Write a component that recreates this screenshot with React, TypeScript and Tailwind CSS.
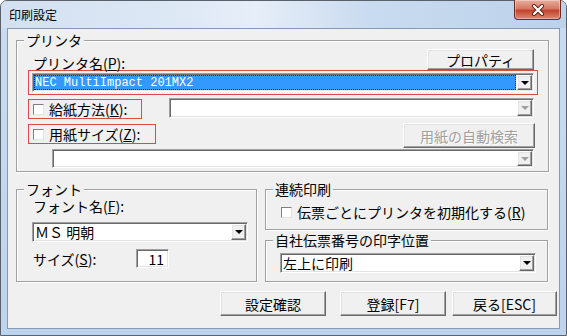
import React from "react";

// classic 3D edges used by the Win32 controls
const sunken =
  "border border-t-[#a0a0a0] border-l-[#a0a0a0] border-b-white border-r-white shadow-[inset_1px_1px_0_#696969,inset_-1px_-1px_0_#e3e3e3]";
const raised =
  "border border-t-white border-l-white border-b-[#696969] border-r-[#696969] shadow-[inset_-1px_-1px_0_#a0a0a0,inset_1px_1px_0_#e3e3e3]";

function Arrow({ disabled }: { disabled?: boolean }) {
  return (
    <div
      className={`flex h-full w-[15px] shrink-0 items-center justify-center bg-[#f0f0f0] ${raised}`}
    >
      <div
        className={`h-0 w-0 border-x-[4px] border-t-[4px] border-x-transparent ${
          disabled ? "border-t-[#a0a0a0]" : "border-t-black"
        }`}
      />
    </div>
  );
}

function Combo({
  value,
  className = "",
  selected,
  disabled,
  mono,
}: {
  value?: string;
  className?: string;
  selected?: boolean;
  disabled?: boolean;
  mono?: boolean;
}) {
  return (
    <div className={`flex bg-white p-[1px] ${sunken} ${className}`}>
      <div
        className={`flex min-w-0 flex-1 items-center ${
          selected
            ? "mr-[1px] border border-dotted border-[#222] bg-[#3399ff] text-white"
            : "pl-[1px]"
        } ${mono ? "font-['Liberation_Mono',monospace] text-[12px]" : ""}`}
      >
        {value}
      </div>
      <Arrow disabled={disabled} />
    </div>
  );
}

function Check() {
  return (
    <div className="h-[11px] w-[11px] shrink-0 border border-t-[#808080] border-l-[#808080] border-b-[#e3e3e3] border-r-[#e3e3e3] bg-white" />
  );
}

function Btn({
  children,
  className = "",
  disabled,
}: {
  children: React.ReactNode;
  className?: string;
  disabled?: boolean;
}) {
  return (
    <div
      className={`flex items-center justify-center bg-[#f0f0f0] ${raised} ${
        disabled ? "text-[#a0a0a0] [text-shadow:1px_1px_0_#fff]" : ""
      } ${className}`}
    >
      {children}
    </div>
  );
}

function GroupBox({
  title,
  className = "",
  children,
}: {
  title: string;
  className?: string;
  children?: React.ReactNode;
}) {
  return (
    <div
      className={`relative border border-[#a0a0a0] shadow-[inset_1px_1px_0_#fff,1px_1px_0_#fff] ${className}`}
    >
      <span className="absolute -top-[9px] left-[7px] flex h-[16px] items-center bg-[#f0f0f0] px-[2px] leading-[14px]">
        {title}
      </span>
      {children}
    </div>
  );
}

const U = ({ c }: { c: string }) => (
  <span className="underline underline-offset-[1px]">{c}</span>
);

export default function App() {
  return (
    <div className="h-[336px] w-[567px] bg-white font-['Noto_Sans_CJK_JP','Noto_Sans_CJK_SC',sans-serif] text-[14px] leading-[16px] text-black">
      <div className="flex h-[336px] w-[567px] flex-col rounded-t-[7px] border border-[#59616d] bg-[linear-gradient(180deg,#c9dcf1_0%,#bed4ec_100%)] px-[6px] pb-[6px]">
        {/* Title bar */}
        <div className="-mx-[6px] flex h-[27px] shrink-0 rounded-t-[6px] bg-[linear-gradient(90deg,#d2e0f0_0%,#dde8f5_30%,#e6eef8_45%,#c9dbef_65%,#bcd2eb_100%)] pl-[8px]">
          <span className="mt-[6px] text-[12px] leading-[16px]">印刷設定</span>
          <div className="-mt-[1px] ml-auto mr-[5px] flex h-[20px] w-[47px] items-center justify-center rounded-b-[4px] border border-t-0 border-[#6b2a22] bg-[linear-gradient(180deg,#e9ad9d_0%,#d67a66_45%,#c3432e_55%,#d98a72_100%)] shadow-[inset_0_0_0_1px_rgba(255,255,255,0.35)]">
            <svg width="14" height="12" viewBox="0 0 14 12">
              <path
                d="M3 2 L11 10 M11 2 L3 10"
                stroke="#5a2218"
                strokeWidth="4"
                strokeLinecap="round"
              />
              <path
                d="M3 2 L11 10 M11 2 L3 10"
                stroke="#fff"
                strokeWidth="2.2"
                strokeLinecap="round"
              />
            </svg>
          </div>
        </div>

        {/* Client area */}
        <div className="flex flex-1 flex-col border border-[#8499b4] bg-[#f0f0f0] pl-[8px] pt-[11px]">
          {/* プリンタ */}
          <GroupBox
            title="プリンタ"
            className="h-[132px] w-[533px] pl-[11px] pr-[10px] pt-[8px]"
          >
            <div className="flex h-[21px] items-end">
              <span className="mb-[-1px] ml-[5px]">
                プリンタ名(<U c="P" />):
              </span>
              <Btn className="ml-auto mr-[4px] h-[21px] w-[107px]">プロパティ</Btn>
            </div>
            <div className="flex h-[25px] items-center border border-[#e04848] px-[3px]">
              <Combo
                value="NEC MultiImpact 201MX2"
                selected
                mono
                className="h-[19px] flex-1"
              />
            </div>
            <div className="mt-[3px] flex items-start">
              <div className="mt-[1px] flex h-[20px] w-[114px] items-center gap-[5px] border border-[#e04848] pl-[4px]">
                <Check />
                <span>
                  給紙方法(<U c="K" />):
                </span>
              </div>
              <Combo disabled className="ml-auto mr-[4px] h-[20px] w-[365px]" />
            </div>
            <div className="mt-[4px] flex items-start">
              <div className="mt-[1px] flex h-[20px] w-[128px] items-center gap-[5px] border border-[#e04848] pl-[4px]">
                <Check />
                <span>
                  用紙サイズ(<U c="Z" />):
                </span>
              </div>
              <Btn disabled className="ml-auto mr-[3px] h-[25px] w-[132px]">
                用紙の自動検索
              </Btn>
            </div>
            <div className="mt-[1px] flex">
              <Combo disabled className="ml-[24px] mr-[4px] h-[19px] flex-1" />
            </div>
          </GroupBox>

          {/* Font / 連続印刷 / 位置 */}
          <div className="mt-[17px] flex gap-[8px]">
            <GroupBox
              title="フォント"
              className="h-[93px] w-[241px] pl-[15px] pt-[9px]"
            >
              <div className="ml-[1px] leading-[14px]">
                フォント名(<U c="F" />):
              </div>
              <Combo value="ＭＳ 明朝" className="mt-[9px] h-[20px] w-[216px]" />
              <div className="mt-[7px] flex h-[19px] items-center">
                <span className="ml-[1px] w-[103px]">
                  サイズ(<U c="S" />):
                </span>
                <div
                  className={`flex h-[19px] w-[33px] items-center justify-end bg-white pr-[4px] ${sunken}`}
                >
                  11
                </div>
              </div>
            </GroupBox>

            <div className="flex w-[283px] flex-col gap-[10px]">
              <GroupBox title="連続印刷" className="h-[41px] pl-[15px] pt-[14px]">
                <div className="flex h-[16px] items-center gap-[5px]">
                  <Check />
                  <span>
                    伝票ごとにプリンタを初期化する(<U c="R" />)
                  </span>
                </div>
              </GroupBox>
              <GroupBox
                title="自社伝票番号の印字位置"
                className="h-[42px] pl-[14px] pr-[11px] pt-[12px]"
              >
                <Combo value="左上に印刷" className="h-[20px]" />
              </GroupBox>
            </div>
          </div>

          {/* Buttons */}
          <div className="mt-[9px] flex pl-[204px]">
            <Btn className="h-[25px] w-[106px]">設定確認</Btn>
            <Btn className="ml-[14px] h-[25px] w-[106px]">登録[F7]</Btn>
            <Btn className="ml-[6px] h-[25px] w-[105px]">戻る[ESC]</Btn>
          </div>
        </div>
      </div>
    </div>
  );
}
